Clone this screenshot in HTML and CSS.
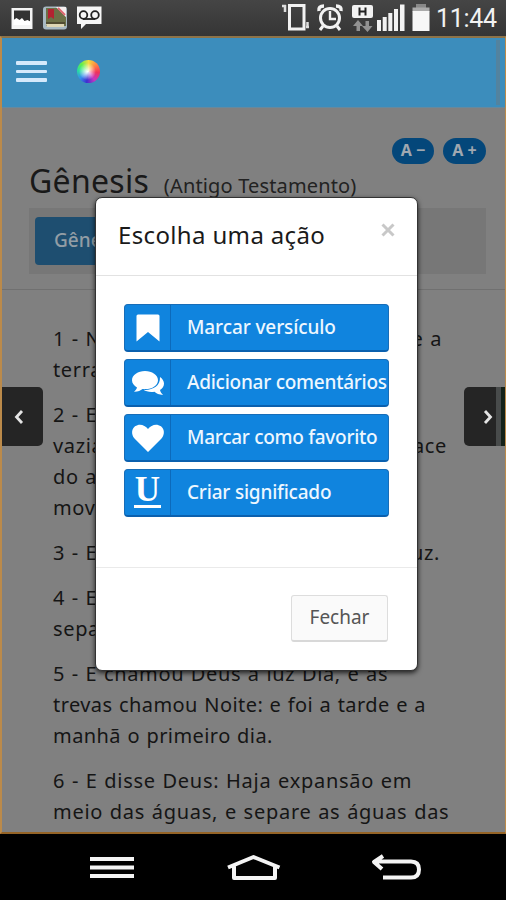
FILE: index.html
```html
<!DOCTYPE html>
<html lang="pt-BR">
<head>
<meta charset="utf-8">
<title>Gênesis</title>
<link rel="stylesheet" href="styles.css">
</head>
<body>
<div class="phone">
  <div class="status">
    <svg class="status-left" width="110" height="35" viewBox="0 0 110 35">
      <rect x="11.500" y="8" width="21" height="21" fill="#f4f4f4"/>
      <rect x="14" y="10.500" width="16" height="13" fill="#333"/>
      <path d="M13.500 20l3-2 3 2 2.500-2 2.500 3 3-1 3 1.500V25H13.500z" fill="#fff"/>
      <rect x="43" y="6.500" width="24" height="23" rx="3" fill="#a8b9c3"/>
      <path d="M46 8h11l9 9v9H46z" fill="#6c7047"/>
      <path d="M56 7h10v10z" fill="#f5eeee"/><path d="M58 8l7 7" stroke="#dc6670" stroke-width="2"/>
      <path d="M48 9h6v10l-3-2-3 2z" fill="#b32331"/>
      <path d="M46 24h18v3H47z" fill="#ddd5b4"/><path d="M46 23h19" stroke="#37291e"/>
      <path d="M77 6.500h24.500V24H86l-5 5v-5h-4z" fill="#f6f6f6"/>
      <circle cx="83.500" cy="15" r="3.800" fill="none" stroke="#222" stroke-width="1.800"/>
      <circle cx="95" cy="15" r="3.800" fill="none" stroke="#222" stroke-width="1.800"/>
      <path d="M83 19h12" stroke="#222" stroke-width="1.800"/>
    </svg>
    <svg class="status-right" width="156" height="35" viewBox="280 0 156 35">
      <rect x="289.500" y="5.500" width="14.500" height="23.500" fill="none" stroke="#f2f2f2" stroke-width="3"/>
      <path d="M282 6h4M285 5v7M307.500 22v5M306 27h3" stroke="#ddd" stroke-width="2.500"/>
      <circle cx="330" cy="18" r="9.500" fill="none" stroke="#f3f3f3" stroke-width="3"/>
      <path d="M330 11v8h6" fill="none" stroke="#f3f3f3" stroke-width="2.400"/>
      <path d="M319 11q-1-5 5-5M341 11q1-5-5-5" fill="none" stroke="#f3f3f3" stroke-width="3.500"/>
      <path d="M323 26l-3 4M337 26l3 4" stroke="#f3f3f3" stroke-width="3"/>
      <rect x="352" y="5" width="21" height="13" rx="2" fill="#f2f2f2"/>
      <path d="M359.500 7.500v8M365.500 7.500v8M359 11.500h7" stroke="#222" stroke-width="2"/>
      <path d="M358 20l-5 6h3.500v5h3.500v-5h3zM367.500 32l5-6H369v-5h-3.500v5H362z" fill="#929292"/>
      <path d="M377 20h4v11h-4zM382.700 17h4v14h-4zM388.300 13h4v18h-4zM394 9h4v22h-4zM400 4.500h4.500V31H400z" fill="#f3f3f3"/>
      <rect x="416" y="4" width="10" height="4" fill="#888"/><rect x="412.500" y="7.500" width="17" height="4" fill="#aaa"/>
      <rect x="412.500" y="11" width="17" height="20" fill="#f7f7f7"/>
    </svg>
    <span class="clock">11:44</span>
  </div>
  <div class="app">
    <header class="topbar">
      <div class="menu"><i></i><i></i><i></i></div>
      <div class="wheel"></div>
      <div class="scroll"></div>
    </header>
    <section class="heading">
      <div class="sizes"><span>A −</span><span>A +</span></div>
      <h1>Gênesis <small>(Antigo Testamento)</small></h1>
      <div class="crumbs"><span class="crumb">Gênesis</span></div>
    </section>
    <main class="verses">
      <p><span class="line l1"><b>1 - No princípio criou Deus</b><b>e a</b></span><span class="line">terra.</span></p>
      <p><span class="line">2 - E a terra era sem forma e</span><span class="line l2"><b>vazia; e havia trevas</b><b>face</b></span><span class="line">do abismo; e o Espírito</span><span class="line">movia sobre as águas.</span></p>
      <p><span class="line l3"><b>3 - E disse Deus: Haja</b><b>luz.</b></span></p>
      <p><span class="line">4 - E viu Deus que era boa</span><span class="line">separação entre a luz</span></p>
      <p><span class="line">5 - E chamou Deus à luz Dia, e às</span><span class="line snug">trevas chamou Noite: e foi a tarde e a</span><span class="line snug">manhã o primeiro dia.</span></p>
      <p><span class="line wide">6 - E disse Deus: Haja expansão em</span><span class="line wide">meio das águas, e separe as águas das</span></p>
    </main>
    <div class="pager prev"><svg width="12" height="16" viewBox="0 0 12 16"><path d="M9 2L3.500 8 9 14"/></svg></div>
    <div class="pager next"><svg width="12" height="16" viewBox="0 0 12 16"><path d="M3 2l5.500 6L3 14"/></svg></div>
  </div>
  <nav class="nav">
    <svg width="506" height="66" viewBox="0 834 506 66">
      <path d="M90 859h44M90 867.500h44M90 876h44" stroke-width="4.200"/>
      <path d="M228 867.500l25.500-10.500 26 10.500M234 866v12h41v-12" stroke-width="4"/>
      <path d="M383 877.500h28q8 0 8-8t-8-8h-36M383 856l-9 6 8 7" stroke-width="4"/>
    </svg>
  </nav>
  <div class="modal">
    <div class="modal-head"><h2>Escolha uma ação</h2><svg class="close" width="14" height="14" viewBox="0 0 14 14"><path d="M1.500 1.500l11 11M12.500 1.500l-11 11"/></svg></div>
    <div class="actions">
      <div class="action"><span class="icon"><svg width="32" height="32" viewBox="0 0 32 32"><path d="M6 2.500h20q1.500 0 1.500 1.500v25.500L16 20 4.500 29.500V4Q4.500 2.500 6 2.500z"/></svg></span><span class="label a1">Marcar versículo</span></div>
      <div class="action"><span class="icon"><svg width="32" height="32" viewBox="0 0 32 32"><path d="M13 4C6 4 0 8 0 13.200c0 3 2 5.600 5 7.200-.5 1.800-1.500 3-3 4.300 4 .1 6.500-1.200 8.500-2.800C19 23 26 19 26 13.200 26 8 20 4 13 4z"/><path d="M28 10c2.300 1.500 4 4 4 6.500 0 2.700-1.500 4.900-4 6.500.5 2 1.500 3.500 3 5-4-.2-6.500-1.500-8.500-3.200-5 .6-8.500-.3-11-2C20 23.500 28.500 19.500 28 10z"/></svg></span><span class="label a2">Adicionar comentários</span></div>
      <div class="action"><span class="icon"><svg width="32" height="32" viewBox="0 0 32 32"><path d="M16 30L2.500 16.500C-1 12.500-.5 7 3 4.300 7.500 1 13 3 16 7c3-4 8.500-6 13-2.700 3.500 2.700 4 8.200.5 12.200z"/></svg></span><span class="label a3">Marcar como favorito</span></div>
      <div class="action"><span class="icon under">U</span><span class="label a4">Criar significado</span></div>
    </div>
    <div class="modal-foot"><span class="dismiss">Fechar</span></div>
  </div>
</div>
</body>
</html>
```
FILE: styles.css
```css
* { box-sizing: border-box; }
body { margin: 0; background: #000; font-family: "Noto Sans", sans-serif; }
.phone { position: relative; width: 506px; height: 900px; overflow: hidden; white-space: nowrap; }
.status { height: 36px; background: linear-gradient(#454545, #353535); display: flex; align-items: flex-start; }
.status-left { flex: none; }
.status-right { flex: none; margin-left: 170px; }
.clock { color: #f2f2f2; font: 25px/37px Roboto, sans-serif; letter-spacing: -.3px; }
.app { position: relative; height: 798px; border: solid #bb8a4a; border-width: 2px 1px 2px 2px; border-top-color: #8d7348; border-bottom-color: #946326; background: #808080; overflow: hidden; }
.topbar { height: 70px; background: #3c8dbc; border-bottom: 1px solid #66899e; display: flex; align-items: center; padding-left: 14px; }
.menu { display: flex; flex-direction: column; gap: 5px; width: 31px; margin-top: -2px; }
.menu i { height: 3.500px; border-radius: 1px; background: #d5e9fb; }
.wheel { width: 23px; height: 23px; margin: -2px 0 0 30px; border-radius: 50%; background: radial-gradient(circle at 45% 50%, #fff 0%, rgba(255,255,255,0) 50%), conic-gradient(#f4dc3e, #ff7846 55deg, #ef335a 95deg, #c735c0 145deg, #3d2fd0 190deg, #358cf0 230deg, #27dda0 275deg, #5df04c 315deg, #f4dc3e); }
.scroll { width: 4px; height: 65px; margin-left: auto; margin-right: 5px; background: #53839f; }
.heading { height: 182px; border-bottom: 1px solid #707070; padding: 30px 19px 0 27px; }
.sizes { display: flex; justify-content: flex-end; gap: 9px; }
.sizes span { width: 42px; height: 26px; border-radius: 13px; background: #04477a; color: #a0a8b0; font-size: 16px; font-weight: 700; line-height: 25px; text-align: center; }
.sizes span:last-child { width: 43px; }
h1 { margin: -5px 0 0; height: 49px; font-size: 32px; line-height: 44px; font-weight: 400; color: #191919; letter-spacing: .3px; }
h1 small { font-size: 20px; letter-spacing: .15px; margin-left: 6px; color: #222; }
.crumbs { height: 66px; padding: 9px 6px; background: #777; }
.crumb { display: block; width: 110px; height: 48px; padding-left: 19px; border-radius: 4px; background: #1e4e70; color: #929da5; font-size: 19px; line-height: 46px; font-weight: 500; }
.verses { padding: 33px 0 0 51px; color: #151515; font-size: 20px; line-height: 31px; letter-spacing: .65px; word-spacing: .8px; }
.verses p { margin: 0 0 14px; }
.line { display: flex; justify-content: space-between; width: max-content; }
.line b { font-weight: 400; }
.snug { letter-spacing: .43px; }
.wide { letter-spacing: .72px; }
.l1 { width: 389px; }
.l2 { width: 394px; }
.l3 { width: 387px; }
.pager { position: absolute; top: 349px; height: 59px; background: #252525; display: flex; align-items: center; }
.pager path { fill: none; stroke: #e5e5e5; stroke-width: 2.800; }
.prev { left: 0; width: 41px; border-radius: 0 5px 5px 0; padding-left: 11px; }
.next { right: 0; width: 41px; border-radius: 5px 0 0 5px; padding-left: 18px; background: linear-gradient(90deg, #252525 32px, #484b4b 32px, #484b4b 37px, #142219 37px); }
.nav { height: 66px; background: #000; }
.nav path { fill: none; stroke: #f4f4f4; stroke-linejoin: round; }
.modal { position: absolute; left: 95px; top: 197px; width: 323px; height: 474px; background: #fff; border: 1px solid #333; border-radius: 7px; box-shadow: 0 2px 5px rgba(0,0,0,.75); }
.modal-head { height: 78px; border-bottom: 1px solid #e2e2e2; padding: 0 22px; display: flex; justify-content: space-between; }
h2 { margin: 0; font-size: 24px; line-height: 74px; font-weight: 400; color: #1a1a1a; letter-spacing: .35px; }
.close { margin-top: 25px; }
.close path { stroke: #c8c8c8; stroke-width: 3; }
.actions { height: 291px; padding: 28px; display: flex; flex-direction: column; gap: 7px; }
.action { height: 48px; width: 265px; flex: none; border: 1px solid #176db8; border-bottom: 2px solid #0b60ae; border-radius: 4px; background: #1084de; display: flex; color: #edf7ff; }
.icon { flex: none; width: 46px; border-right: 1px solid #0c6abb; display: flex; align-items: center; justify-content: center; }
.icon svg { width: 32px; height: 32px; fill: #fff; overflow: visible; }
.under { font: 700 35px/36px "Liberation Serif", serif; color: #fff; align-items: flex-start; background: linear-gradient(#fff, #fff) 9px 35px / 27px 3px no-repeat; padding-top: 2px; }
.label { margin-left: 16px; font-size: 19px; line-height: 45px; font-weight: 500; }
.a1 { letter-spacing: -.1px; }
.a2 { letter-spacing: -.25px; }
.a3 { letter-spacing: -.28px; }
.a4 { letter-spacing: -.2px; }
.modal-foot { height: 103px; border-top: 1px solid #eaeaea; padding: 27px 29px 0 0; display: flex; justify-content: flex-end; }
.dismiss { width: 97px; height: 47px; border: 1px solid #ddd; border-bottom: 2px solid #d8d8d8; border-radius: 3px; background: #fafafa; color: #555; text-align: center; font-size: 19px; line-height: 43px; }
```
